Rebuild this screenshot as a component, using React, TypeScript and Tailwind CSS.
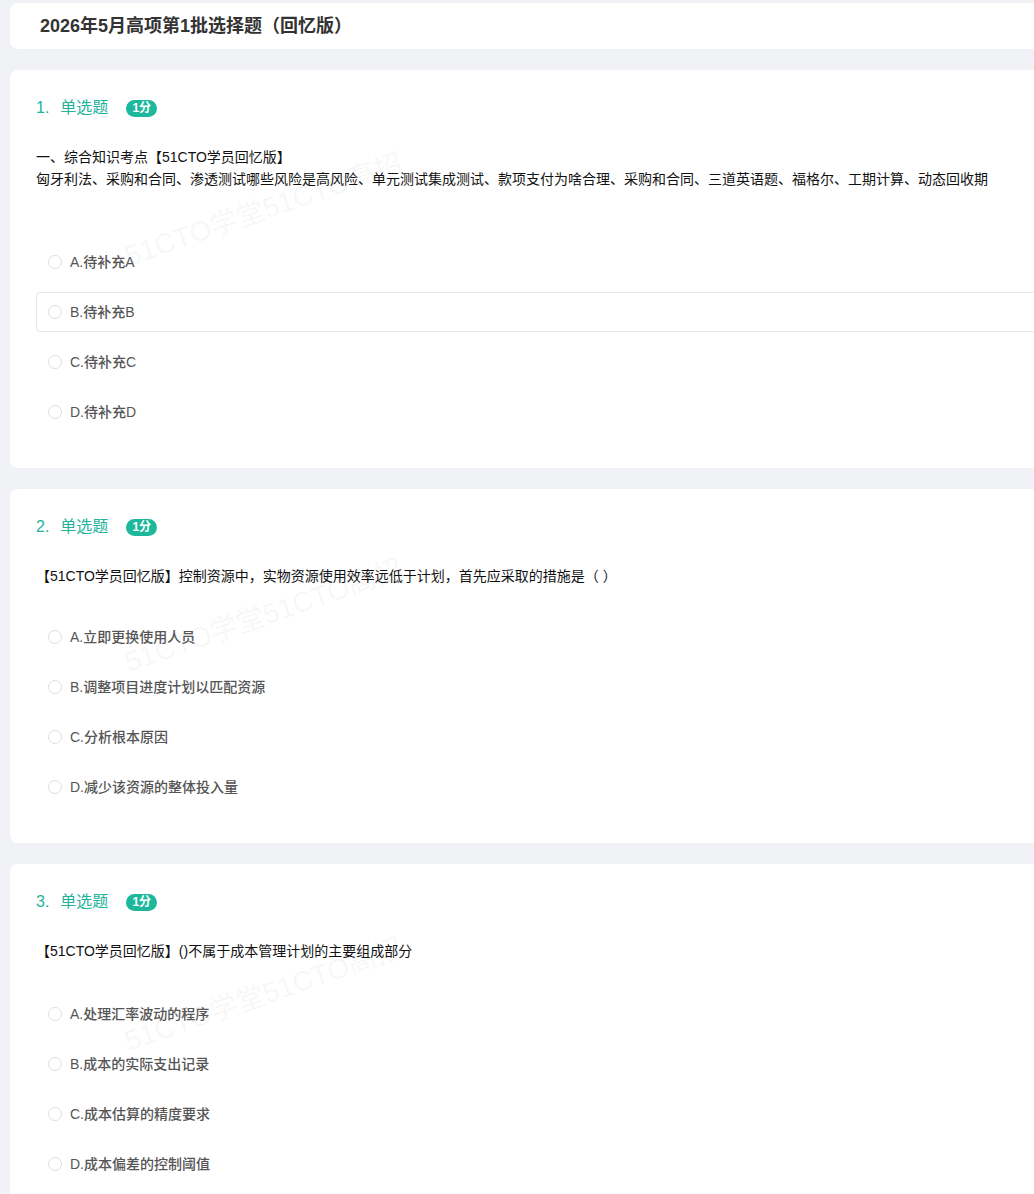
import React from "react";

type Q = {
  n: number;
  lines: string[];
  options: string[];
  hover?: number;
  wmTop: number;
  optTop: number;
};

const questions: Q[] = [
  {
    n: 1,
    lines: [
      "一、综合知识考点【51CTO学员回忆版】",
      "匈牙利法、采购和合同、渗透测试哪些风险是高风险、单元测试集成测试、款项支付为啥合理、采购和合同、三道英语题、福格尔、工期计算、动态回收期",
      "\u00a0",
    ],
    options: ["A.待补充A", "B.待补充B", "C.待补充C", "D.待补充D"],
    hover: 1,
    wmTop: 123,
    optTop: 30,
  },
  {
    n: 2,
    lines: ["【51CTO学员回忆版】控制资源中，实物资源使用效率远低于计划，首先应采取的措施是（  ）"],
    options: ["A.立即更换使用人员", "B.调整项目进度计划以匹配资源", "C.分析根本原因", "D.减少该资源的整体投入量"],
    wmTop: 110,
    optTop: 30,
  },
  {
    n: 3,
    lines: ["【51CTO学员回忆版】()不属于成本管理计划的主要组成部分"],
    options: ["A.处理汇率波动的程序", "B.成本的实际支出记录", "C.成本估算的精度要求", "D.成本偏差的控制阈值"],
    wmTop: 114,
    optTop: 32,
  },
];

function Card({ q }: { q: Q }) {
  return (
    <div className="relative w-[1060px] rounded-[8px] bg-white px-[26px] pt-[26px] pb-[36px] overflow-hidden">
      <div
        className="pointer-events-none absolute left-[108px] whitespace-nowrap text-[28px] leading-[34px] text-[rgba(0,0,0,0.05)] rotate-[-19deg]"
        style={{ top: q.wmTop }}
      >
        51CTO学堂51CTO高招
      </div>
      <div className="relative flex h-[24px] items-center text-[16px] text-[#22b39d]">
        <span>{q.n}.</span>
        <span className="ml-[11px]">单选题</span>
        <span className="ml-[18px] flex h-[17px] items-center rounded-full bg-[#1db89c] px-[6px] text-[12px] font-bold leading-none text-white">
          1分
        </span>
      </div>
      <div className="relative mt-[26px] text-[14px] leading-[22px] text-[#111]">
        {q.lines.map((l, i) => (
          <div key={i}>{l}</div>
        ))}
      </div>
      <div className="relative flex flex-col gap-[10px]" style={{ marginTop: q.optTop }}>
        {q.options.map((o, i) => (
          <div
            key={i}
            className={
              i === q.hover
                ? "flex h-[40px] items-center rounded-[4px] border border-[#e4e6ea] pl-[11px]"
                : "flex h-[40px] items-center rounded-[4px] border border-transparent pl-[11px]"
            }
          >
            <span className="h-[14px] w-[14px] rounded-full border border-[#dcdfe6] bg-white" />
            <span className="ml-[8px] text-[14px] font-medium text-[#555]">{o}</span>
          </div>
        ))}
      </div>
    </div>
  );
}

export default function App() {
  return (
    <div
      className="min-h-[1194px] w-full overflow-hidden bg-[#f0f2f5] pl-[10px] pt-[3px]"
      style={{ fontFamily: '"Liberation Sans", "Noto Sans CJK SC", sans-serif' }}
    >
      <div className="flex w-[1060px] flex-col gap-[21px]">
        <div className="flex h-[46px] items-center rounded-[8px] bg-white pl-[30px] text-[18px] font-bold text-[#333]">
          2026年5月高项第1批选择题（回忆版）
        </div>
        {questions.map((q) => (
          <Card key={q.n} q={q} />
        ))}
      </div>
    </div>
  );
}
